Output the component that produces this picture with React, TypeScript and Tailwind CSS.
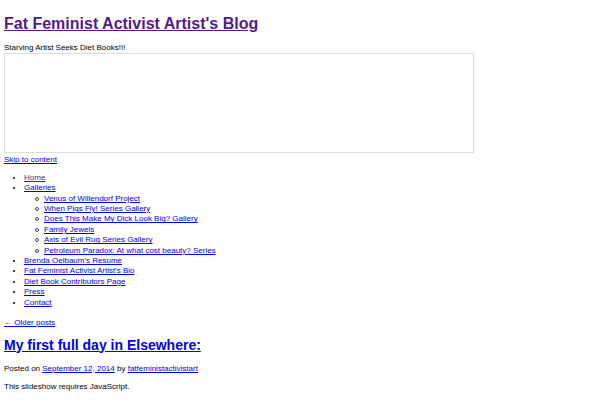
import React from "react";

const link = "text-[#0000ee] underline";
const visited = "text-[#551a8b] underline";

export default function App() {
  const subs = [
    "Venus of Willendorf Project",
    "When Pigs Fly! Series Gallery",
    "Does This Make My Dick Look Big? Gallery",
    "Family Jewels",
    "Axis of Evil Rug Series Gallery",
    "Petroleum Paradox: At what cost beauty? Series",
  ];
  return (
    <div className="bg-white w-[600px] h-[400px] overflow-hidden px-[4px] text-[8px] leading-[10.4px] text-black" style={{ fontFamily: '"Liberation Sans", Arial, sans-serif' }}>
      <h1 className="text-[16px] leading-[21px] font-bold pt-[13px] m-0">
        <a className={visited}>Fat Feminist Activist Artist's Blog</a>
      </h1>
      <div className="mt-[9px]">Starving Artist Seeks Diet Books!!!</div>
      <div className="w-[470px] h-[100px] border border-[#dcdcdc]"></div>
      <div className="mt-[2px]">
        <a className={link}>Skip to content</a>
      </div>
      <ul className="list-disc pl-[20px] mt-[7px]">
        <li><a className={visited}>Home</a></li>
        <li>
          <a className={link}>Galleries</a>
          <ul className="list-none pl-[20px]">
            {subs.map((s) => (
              <li key={s}>
                <span className="inline-block w-[4px] h-[4px] rounded-full border border-[#444] ml-[-9px] mr-[5px] align-middle"></span>
                <a className={link}>{s}</a>
              </li>
            ))}
          </ul>
        </li>
        <li><a className={link}>Brenda Oelbaum's Resume</a></li>
        <li><a className={link}>Fat Feminist Activist Artist's Bio</a></li>
        <li><a className={link}>Diet Book Contributors Page</a></li>
        <li><a className={link}>Press</a></li>
        <li><a className={link}>Contact</a></li>
      </ul>
      <div className="mt-[10px]"><a className={link}>← Older posts</a></div>
      <h2 className="text-[14px] leading-[17px] font-bold mt-[8px]">
        <a className={link}>My first full day in Elsewhere:</a>
      </h2>
      <div className="mt-[10px]">
        Posted on <a className={link}>September 12, 2014</a> by <a className={link}>fatfeministactivistart</a>
      </div>
      <div className="mt-[8px]">This slideshow requires JavaScript.</div>
    </div>
  );
}
